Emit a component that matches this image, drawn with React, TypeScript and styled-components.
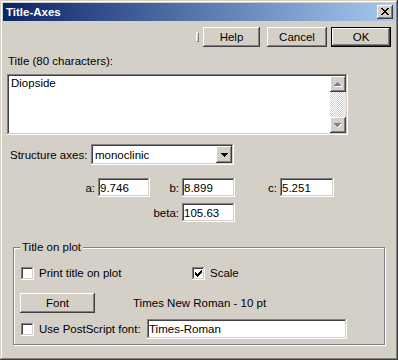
import React from 'react'
import styled, { createGlobalStyle } from 'styled-components'

const face = '#d4d0c8'
const shadow = '#808080'
const dark = '#404040'

const raised = `box-shadow: inset -1px -1px ${dark}, inset 1px 1px #fff, inset -2px -2px ${shadow}, inset 2px 2px ${face};`
const sunken = `box-shadow: inset -1px -1px #fff, inset 1px 1px ${shadow}, inset -2px -2px ${face}, inset 2px 2px ${dark};`

const GlobalStyle = createGlobalStyle`
  html, body {
    margin: 0;
    padding: 0;
    background: ${face};
  }
  body {
    font-family: "Liberation Sans", Arial, sans-serif;
    font-size: 11.5px;
    color: #000;
  }
`

const Window = styled.div`
  width: 398px;
  height: 360px;
  box-sizing: border-box;
  padding: 3px;
  background: ${face};
  box-shadow: inset -1px -1px ${dark}, inset 1px 1px ${face}, inset -2px -2px ${shadow}, inset 2px 2px #fff;
  display: flex;
  flex-direction: column;
`

const TitleBar = styled.div`
  flex: none;
  height: 18px;
  display: flex;
  align-items: center;
  justify-content: space-between;
  padding: 0 2px 0 3px;
  background: linear-gradient(90deg, #0a246a, #a6caf0);
  color: #fff;
  font-weight: bold;
  font-size: 11.5px;
`

const CloseButton = styled.div`
  width: 16px;
  height: 14px;
  background: ${face};
  ${raised}
  display: flex;
  align-items: center;
  justify-content: center;
  padding-bottom: 1px;
  box-sizing: border-box;
`

const Body = styled.div`
  flex: 1;
  display: flex;
  flex-direction: column;
  padding-left: 4px;
`

const ButtonRow = styled.div`
  margin-top: 6px;
  display: flex;
  justify-content: flex-end;
  align-items: center;
  padding-right: 4px;
`

const Gripper = styled.div`
  width: 3px;
  height: 10px;
  box-sizing: border-box;
  border-left: 1px solid #fff;
  border-top: 1px solid #fff;
  border-right: 1px solid ${shadow};
  border-bottom: 1px solid ${shadow};
  margin-right: 4px;
`

const PushButton = styled.div<{ $w: number; $ml?: number; $default?: boolean }>`
  width: ${p => p.$w}px;
  height: 20px;
  margin-left: ${p => p.$ml ?? 0}px;
  flex: none;
  display: flex;
  align-items: center;
  justify-content: center;
  background: ${face};
  ${p =>
    p.$default
      ? `box-shadow: inset 0 0 0 1px #000, inset -2px -2px ${dark}, inset 2px 2px #fff, inset -3px -3px ${shadow}, inset 3px 3px ${face};`
      : raised}
`

const FieldLabel = styled.div`
  margin-top: 8px;
  padding-left: 1px;
  line-height: 13px;
`

const TextBox = styled.div`
  margin-top: 6px;
  width: 341px;
  height: 61px;
  box-sizing: border-box;
  padding: 2px;
  background: #fff;
  ${sunken}
  display: flex;
`

const TextContent = styled.div`
  flex: 1;
  padding: 1px 2px;
  line-height: 13px;
`

const ScrollBar = styled.div`
  width: 16px;
  display: flex;
  flex-direction: column;
`

const ScrollButton = styled.div<{ $h?: number }>`
  width: 16px;
  height: ${p => p.$h ?? 16}px;
  flex: none;
  box-sizing: border-box;
  background: ${face};
  ${raised}
  display: flex;
  align-items: center;
  justify-content: center;
`

const ScrollTrack = styled.div`
  flex: 1;
  background: repeating-conic-gradient(${face} 0 25%, #fff 0 50%) 0 0 / 2px 2px;
`

const AxesRow = styled.div`
  margin-top: 9px;
  display: flex;
  align-items: center;
`

const RowLabel = styled.div<{ $w: number }>`
  width: ${p => p.$w}px;
  flex: none;
  box-sizing: border-box;
  padding-left: 3px;
`

const Select = styled.div`
  width: 143px;
  height: 21px;
  box-sizing: border-box;
  padding: 2px;
  background: #fff;
  ${sunken}
  display: flex;
  align-items: center;
`

const SelectText = styled.div`
  flex: 1;
  padding-left: 2px;
`

const CellGrid = styled.div`
  margin-top: 13px;
  display: grid;
  grid-template-columns: 91px 52px 32px 53px 45px 54px;
  grid-auto-rows: 19px;
  row-gap: 6px;
  align-items: center;
`

const CellLabel = styled.div<{ $col: number }>`
  grid-column: ${p => p.$col};
  text-align: right;
  padding-right: 3px;
`

const Input = styled.div<{ $col?: number; $w?: number; $h?: number }>`
  ${p => (p.$col ? `grid-column: ${p.$col};` : '')}
  ${p => (p.$w ? `width: ${p.$w}px;` : '')}
  height: ${p => p.$h ?? 19}px;
  box-sizing: border-box;
  padding: 2px 3px 2px 2px;
  background: #fff;
  ${sunken}
  display: flex;
  align-items: center;
  white-space: nowrap;
`

const GroupBox = styled.div`
  position: relative;
  margin-top: 25px;
  margin-left: 6px;
  width: 372px;
  height: 98px;
  box-sizing: border-box;
  border: 1px solid ${shadow};
  box-shadow: inset 1px 1px #fff, 1px 1px #fff;
  padding: 15px 6px 0 6px;
  display: flex;
  flex-direction: column;
`

const Legend = styled.div`
  position: absolute;
  top: -7px;
  left: 6px;
  padding: 0 2px;
  background: ${face};
  line-height: 13px;
`

const OptionRow = styled.div<{ $mt?: number }>`
  margin-top: ${p => p.$mt ?? 0}px;
  height: 20px;
  display: flex;
  align-items: center;
`

const OptionGrid = styled.div`
  height: 20px;
  display: grid;
  grid-template-columns: 171px auto;
  align-items: center;
`

const CheckItem = styled.label`
  display: flex;
  align-items: center;
`

const CheckBox = styled.div`
  width: 13px;
  height: 13px;
  margin-left: 1px;
  margin-right: 5px;
  box-sizing: border-box;
  background: #fff;
  ${sunken}
  display: flex;
  align-items: center;
  justify-content: center;
`

const CheckText = styled.span<{ $w?: number }>`
  ${p => (p.$w ? `width: ${p.$w}px; flex: none;` : '')}
`

const FontName = styled.div`
  margin-left: 38px;
`

type GlyphProps = { rows: string[]; color: string; shade?: string }

const Glyph = ({ rows, color, shade }: GlyphProps) => {
  const w = rows[0].length + (shade ? 1 : 0)
  const h = rows.length + (shade ? 1 : 0)
  const cells = (dx: number, fill: string) =>
    rows.flatMap((r, y) =>
      r.split('').map((c, x) =>
        c === '#' ? <rect key={`${fill}${x}-${y}`} x={x + dx} y={y + dx} width={1} height={1} fill={fill} /> : null
      )
    )
  return (
    <svg width={w} height={h} shapeRendering="crispEdges" style={{ display: 'block' }}>
      {shade && cells(1, shade)}
      {cells(0, color)}
    </svg>
  )
}

const closeX = ['##....##', '.##..##.', '..####..', '...##...', '..####..', '.##..##.', '##....##']
const check = ['......#', '.....##', '#...###', '##.###.', '#####..', '.###...', '..#....']
const down = ['#######', '.#####.', '..###..', '...#...']
const up = ['...#...', '..###..', '.#####.', '#######']

const Check = ({ checked, label, w }: { checked?: boolean; label: string; w?: number }) => (
  <CheckItem>
    <CheckBox>{checked && <Glyph rows={check} color="#000" />}</CheckBox>
    <CheckText $w={w}>{label}</CheckText>
  </CheckItem>
)

const App: React.FC = () => (
  <>
    <GlobalStyle />
    <Window>
      <TitleBar>
        <span>Title-Axes</span>
        <CloseButton>
          <Glyph rows={closeX} color="#000" />
        </CloseButton>
      </TitleBar>
      <Body>
        <ButtonRow>
          <Gripper />
          <PushButton $w={57}>Help</PushButton>
          <PushButton $w={60} $ml={7}>Cancel</PushButton>
          <PushButton $w={60} $ml={4} $default>OK</PushButton>
        </ButtonRow>

        <FieldLabel>Title (80 characters):</FieldLabel>
        <TextBox>
          <TextContent>Diopside</TextContent>
          <ScrollBar>
            <ScrollButton>
              <Glyph rows={up} color={shadow} shade="#fff" />
            </ScrollButton>
            <ScrollTrack />
            <ScrollButton>
              <Glyph rows={down} color={shadow} shade="#fff" />
            </ScrollButton>
          </ScrollBar>
        </TextBox>

        <AxesRow>
          <RowLabel $w={84}>Structure axes:</RowLabel>
          <Select>
            <SelectText>monoclinic</SelectText>
            <ScrollButton $h={17}>
              <Glyph rows={down} color="#000" />
            </ScrollButton>
          </Select>
        </AxesRow>

        <CellGrid>
          <CellLabel $col={1}>a:</CellLabel>
          <Input $col={2}>9.746</Input>
          <CellLabel $col={3}>b:</CellLabel>
          <Input $col={4}>8.899</Input>
          <CellLabel $col={5}>c:</CellLabel>
          <Input $col={6}>5.251</Input>
          <CellLabel $col={3}>beta:</CellLabel>
          <Input $col={4}>105.63</Input>
        </CellGrid>

        <GroupBox>
          <Legend>Title on plot</Legend>
          <OptionGrid>
            <Check label="Print title on plot" />
            <Check label="Scale" checked />
          </OptionGrid>
          <OptionRow $mt={10}>
            <PushButton $w={75}>Font</PushButton>
            <FontName>Times New Roman - 10 pt</FontName>
          </OptionRow>
          <OptionRow $mt={6}>
            <Check label="Use PostScript font:" w={108} />
            <Input $w={200} $h={20}>Times-Roman</Input>
          </OptionRow>
        </GroupBox>
      </Body>
    </Window>
  </>
)

export default App
